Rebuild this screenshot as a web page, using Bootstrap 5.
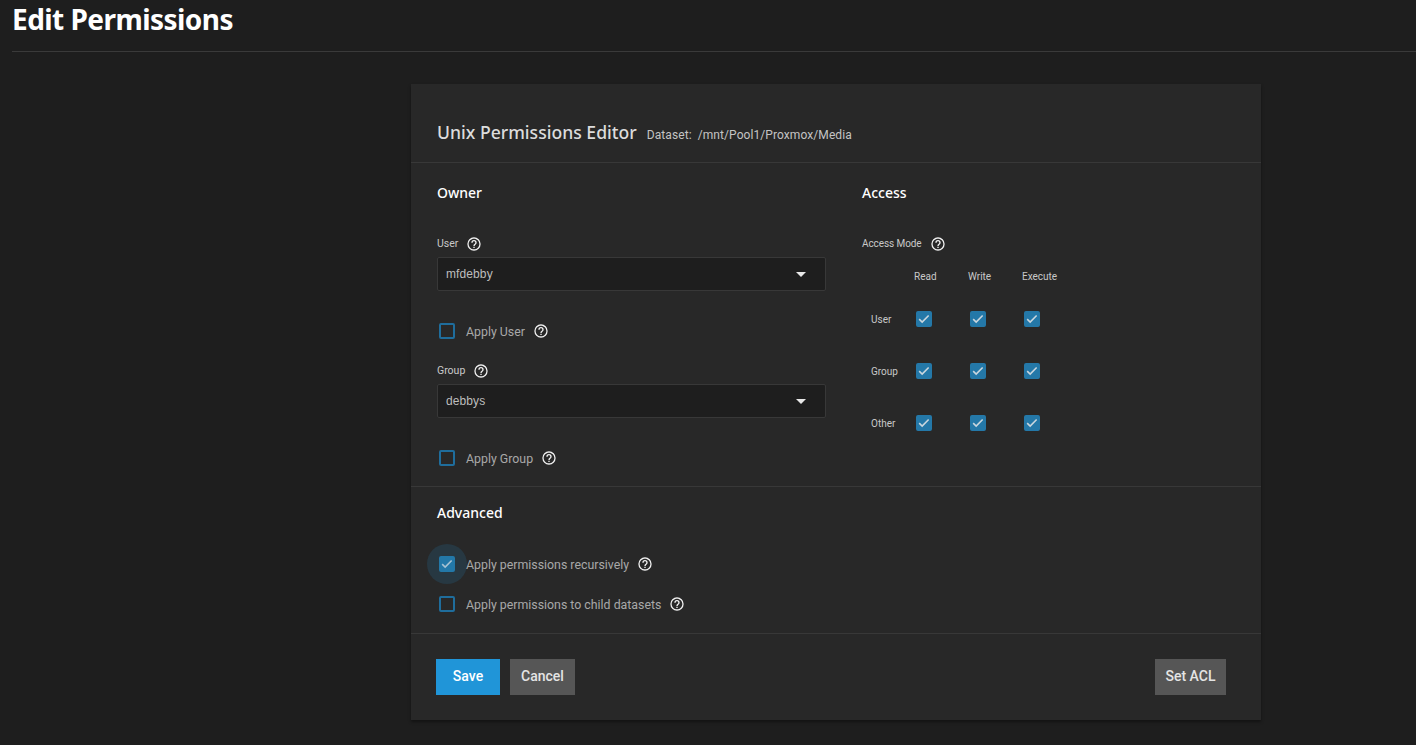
<!DOCTYPE html>
<html lang="en">
<head>
    <meta charset="UTF-8">
    <meta name="viewport" content="width=device-width, initial-scale=1.0">
    <title>Edit Permissions</title>
    <link href="https://cdn.jsdelivr.net/npm/bootstrap@5.3.2/dist/css/bootstrap.min.css" rel="stylesheet">
    <style>
        body {
            background: #1e1e1e;
            color: #d0d0d0;
            font-family: "Roboto", "Liberation Sans", sans-serif;
            height: 745px;
            overflow: hidden;
        }
        .page-head {
            margin-left: 12px;
            height: 52px;
            border-bottom: 1px solid #3a3a3a;
        }
        .page-title {
            margin: 0;
            padding: 2px 0 0 0;
            font: 700 28px/34px "Noto Sans", sans-serif;
            color: #fff;
            letter-spacing: -0.55px;
        }
        .editor {
            margin: 32px 0 0 411px;
            width: 850px;
            height: 636px;
            background: #282828;
            border: 0;
            border-radius: 0;
            box-shadow: 0 2px 3px rgba(0, 0, 0, .4);
        }
        .editor-head {
            height: 79px;
            padding: 36px 0 0 26px;
            border-bottom: 1px solid #383838;
        }
        .editor-title {
            margin: 0;
            font: 500 17.6px/24px "Noto Sans", sans-serif;
            color: #dcdcdc;
        }
        .editor-sub {
            margin-left: 10px;
            font-size: 12px;
            letter-spacing: .08px;
            color: #c4c4c4;
        }
        .editor-sub span { margin-left: 3px; }
        .owner-sec {
            height: 324px;
            padding: 20px 0 0 26px;
            border-bottom: 1px solid #383838;
        }
        .owner-col { width: 389px; margin-right: 36px; }
        .sec-title {
            margin: 0;
            font: 500 14px/20px "Noto Sans", sans-serif;
            color: #fff;
        }
        .lbl {
            font-size: 10.5px;
            line-height: 16px;
            color: #c8c8c8;
        }
        .help-ic {
            width: 16px;
            height: 16px;
            fill: #f2f2f2;
            flex: none;
        }
        .lbl-row { margin-top: 33px; }
        .lbl-row.lbl-next { margin-top: 24px; }
        .lbl-row .lbl-mode { font-size: 10px; letter-spacing: -.08px; }
        .perm-select.form-select {
            height: 34px;
            margin-top: 5px;
            padding: 0 0 0 8px;
            background-color: #1e1e1e;
            border: 1px solid #383838;
            border-radius: 2px;
            color: #bdbdbd;
            font: 12px/32px "Liberation Sans", sans-serif;
            letter-spacing: .1px;
            background-image: url("data:image/svg+xml,%3csvg xmlns='http://www.w3.org/2000/svg' viewBox='0 0 10 5'%3e%3cpath fill='%23e8e8e8' d='M0 0h10L5 5z'/%3e%3c/svg%3e");
            background-size: 10px 5px;
            background-position: right 19px center;
        }
        .chk-row {
            display: flex;
            align-items: center;
            gap: 11px;
            height: 16px;
            padding-left: 2px;
            margin-top: 32px;
        }
        .chk-row .chk-text {
            padding-top: 2px;
            font-size: 12.35px;
            line-height: 14px;
            color: #a8a8a8;
        }
        .chk-row .help-ic { margin-left: -3px; }
        .adv-sec .chk-first { margin-top: 33px; }
        .adv-sec .chk-second { margin-top: 24px; }
        .form-check-input.perm-chk {
            width: 16px;
            height: 16px;
            margin: 0;
            flex: none;
            background-color: transparent;
            border: 2px solid #1f6d9c;
            border-radius: 2px;
            box-shadow: none;
        }
        .form-check-input.perm-chk:checked {
            background-color: #2478a8;
            border-color: #2478a8;
            background-image: url("data:image/svg+xml,%3csvg xmlns='http://www.w3.org/2000/svg' viewBox='0 0 16 16'%3e%3cpath fill='none' stroke='%23c9d6de' stroke-width='1.8' d='M2.5 8.2l3.4 3.4 7.4-7.6'/%3e%3c/svg%3e");
            background-size: 14px 14px;
        }
        .chk-halo {
            display: flex;
            position: relative;
        }
        .chk-halo::before {
            content: "";
            position: absolute;
            left: -12px;
            top: -12px;
            width: 40px;
            height: 40px;
            border-radius: 50%;
            background: rgba(36, 120, 168, .2);
        }
        .access-grid {
            display: grid;
            grid-template-columns: 35px 54px 54px 54px;
            grid-template-rows: 33px repeat(3, 52px);
            justify-items: center;
            align-items: center;
            margin-top: 8px;
        }
        .access-grid .lbl { font-size: 10px; }
        .access-grid .col-lbl { justify-self: start; padding: 1px 0 0 17px; white-space: nowrap; }
        .access-grid .row-lbl { justify-self: start; padding: 2px 0 0 9px; }
        .adv-sec {
            height: 147px;
            padding: 16px 0 0 26px;
            border-bottom: 1px solid #383838;
        }
        .editor-foot { padding: 25px 35px 0 25px; gap: 10px; }
        .foot-btn.btn {
            height: 36px;
            padding: 0 0 2px;
            border: 0;
            border-radius: 0;
            font: 500 14px/34px "Roboto", sans-serif;
            color: #e4e4e4;
            background: #565656;
        }
        .foot-btn.btn-save { width: 64px; background: #2095d8; color: #fff; }
        .foot-btn.btn-cancel { width: 65px; }
        .foot-btn.btn-acl { width: 71px; }
    </style>
</head>
<body>
    <svg class="d-none">
        <symbol id="help" viewBox="0 0 24 24">
            <path d="M11,18H13V16H11V18M12,2A10,10 0 0,0 2,12A10,10 0 0,0 12,22A10,10 0 0,0 22,12A10,10 0 0,0 12,2M12,20C7.59,20 4,16.41 4,12C4,7.59 7.59,4 12,4C16.41,4 20,7.59 20,12C20,16.41 16.41,20 12,20M12,6A4,4 0 0,0 8,10H10A2,2 0 0,1 12,8A2,2 0 0,1 14,10C14,12 11,11.75 11,15H13C13,12.75 16,12.5 16,10A4,4 0 0,0 12,6Z"/>
        </symbol>
    </svg>

    <div class="page-head">
        <h1 class="page-title">Edit Permissions</h1>
    </div>

    <div class="card editor">
        <div class="editor-head d-flex align-items-baseline">
            <h2 class="editor-title">Unix Permissions Editor</h2>
            <div class="editor-sub">Dataset: <span>/mnt/Pool1/Proxmox/Media</span></div>
        </div>

        <div class="owner-sec d-flex">
            <div class="owner-col">
                <h3 class="sec-title">Owner</h3>
                <div class="lbl-row d-flex align-items-center gap-2">
                    <span class="lbl">User</span>
                    <svg class="help-ic"><use href="#help"/></svg>
                </div>
                <select class="form-select perm-select"><option>mfdebby</option></select>
                <div class="chk-row">
                    <input class="form-check-input perm-chk" type="checkbox">
                    <span class="chk-text">Apply User</span>
                    <svg class="help-ic"><use href="#help"/></svg>
                </div>
                <div class="lbl-row lbl-next d-flex align-items-center gap-2">
                    <span class="lbl">Group</span>
                    <svg class="help-ic"><use href="#help"/></svg>
                </div>
                <select class="form-select perm-select"><option>debbys</option></select>
                <div class="chk-row">
                    <input class="form-check-input perm-chk" type="checkbox">
                    <span class="chk-text">Apply Group</span>
                    <svg class="help-ic"><use href="#help"/></svg>
                </div>
            </div>
            <div>
                <h3 class="sec-title">Access</h3>
                <div class="lbl-row d-flex align-items-center gap-2">
                    <span class="lbl lbl-mode">Access Mode</span>
                    <svg class="help-ic"><use href="#help"/></svg>
                </div>
                <div class="access-grid">
                    <span></span><span class="lbl col-lbl">Read</span><span class="lbl col-lbl">Write</span><span class="lbl col-lbl">Execute</span>
                    <span class="lbl row-lbl">User</span>
                    <input class="form-check-input perm-chk" type="checkbox" checked>
                    <input class="form-check-input perm-chk" type="checkbox" checked>
                    <input class="form-check-input perm-chk" type="checkbox" checked>
                    <span class="lbl row-lbl">Group</span>
                    <input class="form-check-input perm-chk" type="checkbox" checked>
                    <input class="form-check-input perm-chk" type="checkbox" checked>
                    <input class="form-check-input perm-chk" type="checkbox" checked>
                    <span class="lbl row-lbl">Other</span>
                    <input class="form-check-input perm-chk" type="checkbox" checked>
                    <input class="form-check-input perm-chk" type="checkbox" checked>
                    <input class="form-check-input perm-chk" type="checkbox" checked>
                </div>
            </div>
        </div>

        <div class="adv-sec">
            <h3 class="sec-title">Advanced</h3>
            <div class="chk-row chk-first">
                <span class="chk-halo"><input class="form-check-input perm-chk" type="checkbox" checked></span>
                <span class="chk-text">Apply permissions recursively</span>
                <svg class="help-ic"><use href="#help"/></svg>
            </div>
            <div class="chk-row chk-second">
                <input class="form-check-input perm-chk" type="checkbox">
                <span class="chk-text">Apply permissions to child datasets</span>
                <svg class="help-ic"><use href="#help"/></svg>
            </div>
        </div>

        <div class="editor-foot d-flex">
            <button class="btn foot-btn btn-save" type="button">Save</button>
            <button class="btn foot-btn btn-cancel" type="button">Cancel</button>
            <button class="btn foot-btn btn-acl ms-auto" type="button">Set ACL</button>
        </div>
    </div>

    <script src="https://cdn.jsdelivr.net/npm/bootstrap@5.3.2/dist/js/bootstrap.bundle.min.js"></script>
</body>
</html>
